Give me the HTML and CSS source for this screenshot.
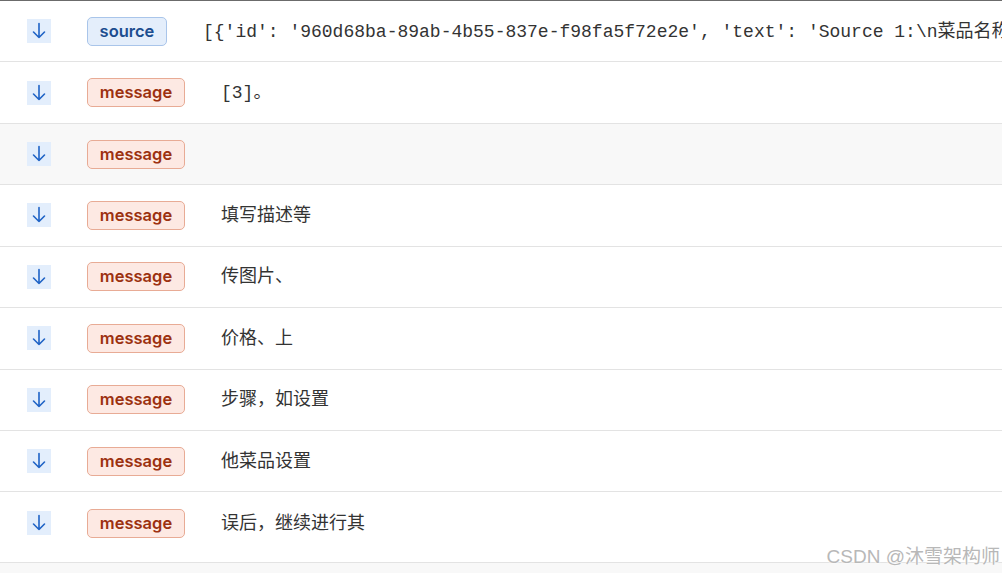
FILE: index.html
```html
<!DOCTYPE html>
<html>
<head>
<meta charset="utf-8">
<link rel="stylesheet" href="styles.css">
</head>
<body>
<div class="list">
  <div class="row">
    <span class="icon"><svg viewBox="0 0 24 24" width="24" height="24"><path d="M12 4.5v14M6.5 13l5.5 5.5 5.5-5.5" fill="none" stroke="#1f63c6" stroke-width="1.6" stroke-linecap="round" stroke-linejoin="round"/></svg></span>
    <span class="badge source">source</span>
    <span class="text mono">[{'id': '960d68ba-89ab-4b55-837e-f98fa5f72e2e', 'text': 'Source 1:\n菜品名称'}]</span>
  </div>
  <div class="row">
    <span class="icon"><svg viewBox="0 0 24 24" width="24" height="24"><path d="M12 4.5v14M6.5 13l5.5 5.5 5.5-5.5" fill="none" stroke="#1f63c6" stroke-width="1.6" stroke-linecap="round" stroke-linejoin="round"/></svg></span>
    <span class="badge message">message</span>
    <span class="text mono">[3]。</span>
  </div>
  <div class="row alt">
    <span class="icon"><svg viewBox="0 0 24 24" width="24" height="24"><path d="M12 4.5v14M6.5 13l5.5 5.5 5.5-5.5" fill="none" stroke="#1f63c6" stroke-width="1.6" stroke-linecap="round" stroke-linejoin="round"/></svg></span>
    <span class="badge message">message</span>
    <span class="text mono"></span>
  </div>
  <div class="row">
    <span class="icon"><svg viewBox="0 0 24 24" width="24" height="24"><path d="M12 4.5v14M6.5 13l5.5 5.5 5.5-5.5" fill="none" stroke="#1f63c6" stroke-width="1.6" stroke-linecap="round" stroke-linejoin="round"/></svg></span>
    <span class="badge message">message</span>
    <span class="text mono">填写描述等</span>
  </div>
  <div class="row">
    <span class="icon"><svg viewBox="0 0 24 24" width="24" height="24"><path d="M12 4.5v14M6.5 13l5.5 5.5 5.5-5.5" fill="none" stroke="#1f63c6" stroke-width="1.6" stroke-linecap="round" stroke-linejoin="round"/></svg></span>
    <span class="badge message">message</span>
    <span class="text mono">传图片、</span>
  </div>
  <div class="row">
    <span class="icon"><svg viewBox="0 0 24 24" width="24" height="24"><path d="M12 4.5v14M6.5 13l5.5 5.5 5.5-5.5" fill="none" stroke="#1f63c6" stroke-width="1.6" stroke-linecap="round" stroke-linejoin="round"/></svg></span>
    <span class="badge message">message</span>
    <span class="text mono">价格、上</span>
  </div>
  <div class="row">
    <span class="icon"><svg viewBox="0 0 24 24" width="24" height="24"><path d="M12 4.5v14M6.5 13l5.5 5.5 5.5-5.5" fill="none" stroke="#1f63c6" stroke-width="1.6" stroke-linecap="round" stroke-linejoin="round"/></svg></span>
    <span class="badge message">message</span>
    <span class="text mono">步骤，如设置</span>
  </div>
  <div class="row">
    <span class="icon"><svg viewBox="0 0 24 24" width="24" height="24"><path d="M12 4.5v14M6.5 13l5.5 5.5 5.5-5.5" fill="none" stroke="#1f63c6" stroke-width="1.6" stroke-linecap="round" stroke-linejoin="round"/></svg></span>
    <span class="badge message">message</span>
    <span class="text mono">他菜品设置</span>
  </div>
  <div class="row last">
    <span class="icon"><svg viewBox="0 0 24 24" width="24" height="24"><path d="M12 4.5v14M6.5 13l5.5 5.5 5.5-5.5" fill="none" stroke="#1f63c6" stroke-width="1.6" stroke-linecap="round" stroke-linejoin="round"/></svg></span>
    <span class="badge message">message</span>
    <span class="text mono">误后，继续进行其</span>
  </div>
  <div class="row alt tail"></div>
</div>
<div class="watermark">CSDN @沐雪架构师</div>
</body>
</html>
```

FILE: styles.css
```css
html, body {
  margin: 0;
  padding: 0;
  background: #ffffff;
  overflow: hidden;
}

body {
  width: 1002px;
  height: 573px;
  position: relative;
  font-family: "Noto Sans CJK SC", "Noto Sans", sans-serif;
}

.list {
  border-top: 1px solid #6b6b6b;
}

.row {
  box-sizing: border-box;
  height: 61.43px;
  display: flex;
  align-items: center;
  gap: 36px;
  padding-left: 27px;
  border-bottom: 1px solid #e3e3e3;
  white-space: nowrap;
  overflow: hidden;
}

.row.alt {
  background: #f8f8f8;
}

.row.last {
  height: 71px;
  padding-bottom: 8px;
}

.row.tail {
  border-bottom: none;
  height: 20px;
}

.icon {
  flex: none;
  width: 24px;
  height: 24px;
  background: #e3eefc;
  display: block;
}

.icon svg {
  display: block;
}

.badge {
  flex: none;
  box-sizing: border-box;
  height: 29px;
  border-radius: 5px;
  border: 1px solid;
  font-family: Inter, "Noto Sans", sans-serif;
  font-weight: 600;
  font-size: 16.5px;
  line-height: 27px;
  display: flex;
  align-items: center;
  justify-content: center;
  padding: 0;
}

.badge.source {
  background: #e4eefb;
  border-color: #a9c5ea;
  color: #1c4d8f;
  width: 80px;
}

.badge.message {
  background: #fde9e3;
  border-color: #e8ab95;
  color: #9c3110;
  width: 98px;
}

.text {
  color: #333333;
  font-size: 18px;
  line-height: 24px;
  margin-top: 1px;
}

.mono {
  font-family: "Liberation Mono", "Noto Sans CJK SC", monospace;
}

.watermark {
  position: absolute;
  right: 2px;
  bottom: 5px;
  font-family: "Liberation Sans", "Noto Sans CJK SC", sans-serif;
  font-size: 19px;
  color: #b8b8b8;
  text-shadow: 0 0 2px #ffffff, 0 0 2px #ffffff;
}
```
